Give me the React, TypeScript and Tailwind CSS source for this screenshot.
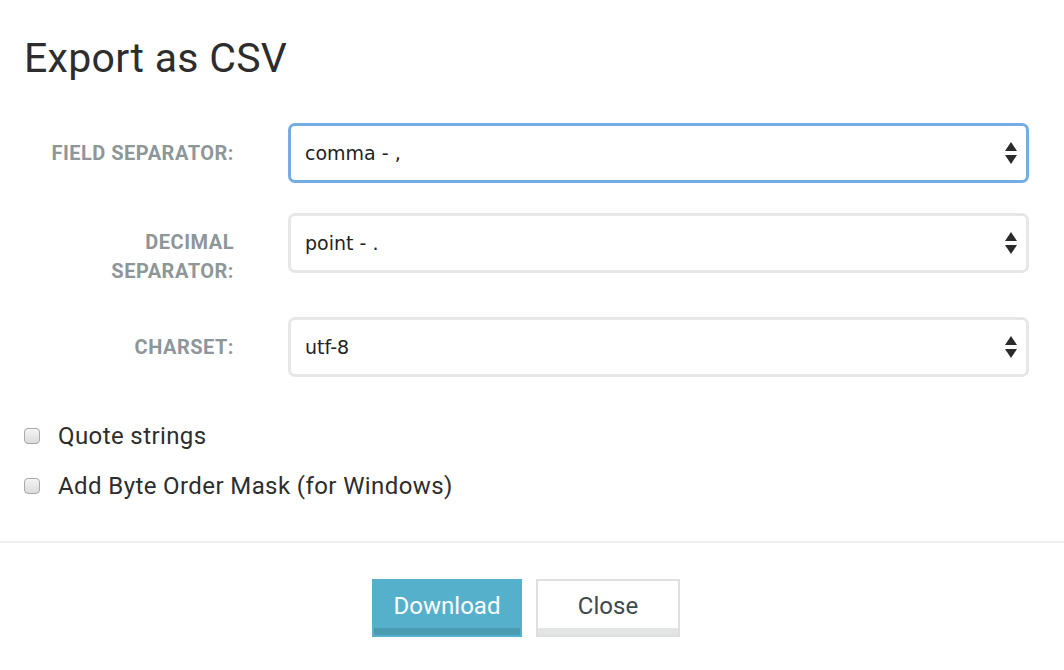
import React from "react";

function Arrows() {
  return (
    <svg width="14" height="24" viewBox="0 0 14 24" className="shrink-0">
      <path d="M7 1 L13 10 L1 10 Z" fill="#2b2b2b" />
      <path d="M1 14 L13 14 L7 23 Z" fill="#2b2b2b" />
    </svg>
  );
}

function Select({ value, focused }: { value: string; focused?: boolean }) {
  return (
    <div
      className={
        "flex h-[60px] w-[741px] items-center justify-between rounded-[7px] border-[3px] bg-white pl-[14px] pr-[8px] " +
        (focused ? "border-[#74ade5]" : "border-[#e7e7e7]")
      }
    >
      <span className="text-[19px] text-[#222]" style={{ fontFamily: '"DejaVu Sans", sans-serif' }}>
        {value}
      </span>
      <Arrows />
    </div>
  );
}

function Checkbox({ label }: { label: string }) {
  return (
    <div className="flex h-[30px] items-center">
      <div className="h-[16px] w-[16px] rounded-[4px] border border-[#a9a9a9] bg-gradient-to-b from-[#f4f4f4] to-[#dcdcdc]" />
      <span className="ml-[18px] text-[24px] leading-[30px] tracking-[0.4px] text-[#2d2d2d]">{label}</span>
    </div>
  );
}

export default function App() {
  const label = "w-[210px] text-right text-[20px] font-bold uppercase leading-[29px] tracking-[0.5px] text-[#8d9698]";
  return (
    <div className="h-[670px] w-[1064px] bg-white" style={{ fontFamily: 'Roboto, "Open Sans", sans-serif' }}>
      <div className="px-[24px] pt-[34px]">
        <h1 className="text-[41px] font-normal leading-[48px] tracking-[0.3px] text-[#2d2d2d]">Export as CSV</h1>

        <div className="mt-[41px] flex items-center">
          <div className={label}>Field separator:</div>
          <div className="ml-[54px]">
            <Select value="comma - ," focused />
          </div>
        </div>

        <div className="mt-[30px] flex items-start">
          <div className={label + " pt-[15px]"}>
            Decimal
            <br />
            separator:
          </div>
          <div className="ml-[54px]">
            <Select value="point - ." />
          </div>
        </div>

        <div className="mt-[31px] flex items-center">
          <div className={label}>Charset:</div>
          <div className="ml-[54px]">
            <Select value="utf-8" />
          </div>
        </div>

        <div className="mt-[44px] flex flex-col gap-[20px]">
          <Checkbox label="Quote strings" />
          <Checkbox label="Add Byte Order Mask (for Windows)" />
        </div>
      </div>

      <div className="mt-[40px] h-[2px] w-full bg-[#efefef]" />

      <div className="mt-[36px] flex justify-center gap-[14px] pr-[12px]">
        <button className="h-[58px] w-[150px] border-2 border-[#55b1cb] bg-[#55b1cb] pb-[4px] text-[24px] text-white shadow-[inset_0_-7px_0_#4a9bb1]">
          Download
        </button>
        <button className="h-[58px] w-[144px] border-2 border-[#dde0df] bg-white pb-[4px] text-[24px] text-[#3d4a4c] shadow-[inset_0_-7px_0_#e3e5e4]">
          Close
        </button>
      </div>
    </div>
  );
}
